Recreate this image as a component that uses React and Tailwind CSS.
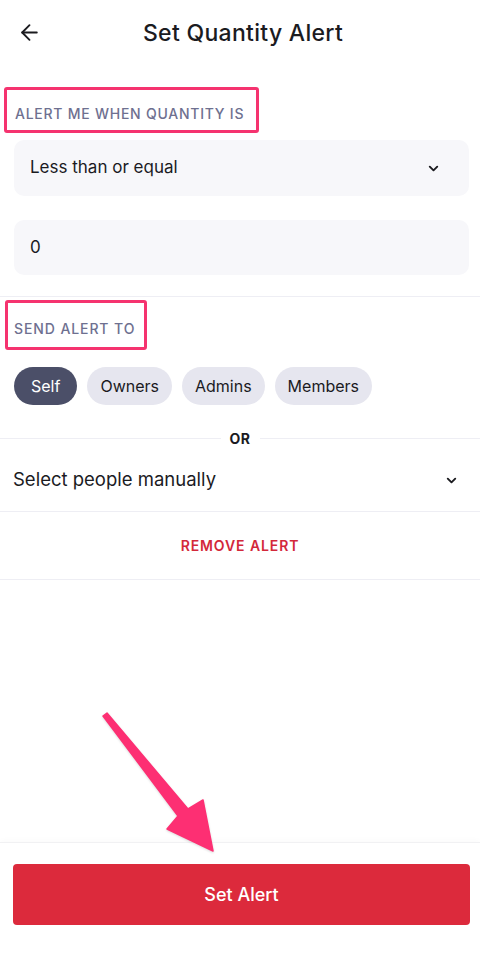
import React from 'react';
import { ArrowLeft, ChevronDown } from 'lucide-react';

const chips = ['Self', 'Owners', 'Admins', 'Members'];

const App = () => {
  return (
    <div className="relative flex min-h-screen w-full flex-col bg-white font-['Inter',sans-serif] text-[#1b1b1f]">
      {/* Header */}
      <div className="relative flex h-[66px] items-center justify-center">
        <button className="absolute left-[17px] top-[20px] text-[#1b1b1f]">
          <ArrowLeft size={25} strokeWidth={1.8} />
        </button>
        <h1 className="ml-[6px] text-[23px] font-medium tracking-[0.3px]">Set Quantity Alert</h1>
      </div>

      {/* Quantity section */}
      <div className="mt-[21px] ml-[4px] flex h-[46px] w-[255px] items-center rounded-[3px] border-[3px] border-[#f5336f] pl-[8px] pt-[7px]">
        <span className="text-[14px] font-medium uppercase tracking-[0.75px] text-[#6e7090]">
          Alert me when quantity is
        </span>
      </div>

      <div className="ml-[14px] mr-[11px] mt-[7px] flex h-[56px] items-center justify-between rounded-[10px] bg-[#f7f7fa] pl-[16px] pr-[28px]">
        <span className="text-[17px]">Less than or equal</span>
        <ChevronDown size={15} strokeWidth={3} />
      </div>

      <div className="ml-[14px] mr-[11px] mt-[24px] flex h-[55px] items-center rounded-[10px] bg-[#f7f7fa] pl-[16px]">
        <span className="text-[17px]">0</span>
      </div>

      <div className="mt-[21px] border-t border-[#eeeef4]" />

      {/* Recipients section */}
      <div className="mt-[3px] ml-[5px] flex h-[50px] w-[142px] items-center rounded-[3px] border-[3px] border-[#f5336f] pl-[6px] pt-[6px]">
        <span className="text-[14px] font-medium uppercase tracking-[0.9px] text-[#6e7090]">
          Send alert to
        </span>
      </div>

      <div className="mt-[17px] flex gap-[10px] px-[14px]">
        {chips.map((c, i) => (
          <span
            key={c}
            className={
              i === 0
                ? 'flex h-[38px] items-center rounded-full bg-[#4b4f68] px-[17px] text-[16px] text-white'
                : 'flex h-[38px] items-center rounded-full bg-[#e6e6ef] px-[13px] text-[16px] text-[#1b1b1f]'
            }
          >
            {c}
          </span>
        ))}
      </div>

      <div className="mt-[23px] flex items-center gap-[9px]">
        <div className="flex-1 border-t border-[#eeeef4]" />
        <span className="text-[14px] font-bold tracking-[0.5px]">OR</span>
        <div className="flex-1 border-t border-[#eeeef4]" />
      </div>

      <div className="flex h-[63px] items-center justify-between border-b border-[#eeeef4] pl-[13px] pr-[21px]">
        <span className="text-[18.5px]">Select people manually</span>
        <ChevronDown size={15} strokeWidth={3} />
      </div>

      <div className="flex h-[68px] items-center justify-center border-b border-[#eeeef4]">
        <span className="text-[14px] font-semibold uppercase tracking-[0.9px] text-[#d3283a]">
          Remove alert
        </span>
      </div>

      <div className="flex-1" />

      {/* Footer */}
      <div className="border-t border-[#f1f1f3] pl-[13px] pr-[10px] pb-[54px] pt-[21px] shadow-[0_-2px_6px_rgba(0,0,0,0.02)]">
        <button className="flex h-[61px] w-full items-center justify-center rounded-[4px] bg-[#dc2a3c] text-[18px] font-medium text-white">
          Set Alert
        </button>
      </div>

      {/* Annotation arrow */}
      <svg
        className="pointer-events-none absolute left-0 top-0"
        width="480"
        height="979"
        viewBox="0 0 480 979"
      >
        <polygon
          points="103,716 107,713 188,809 203,800 213,851 167,829 178,816"
          fill="#fd2f73"
          stroke="#fd2f73"
          strokeWidth="1.5"
          strokeLinejoin="round"
          style={{ filter: 'drop-shadow(0 1px 1px rgba(0,0,0,0.15))' }}
        />
      </svg>
    </div>
  );
};

export default App;
